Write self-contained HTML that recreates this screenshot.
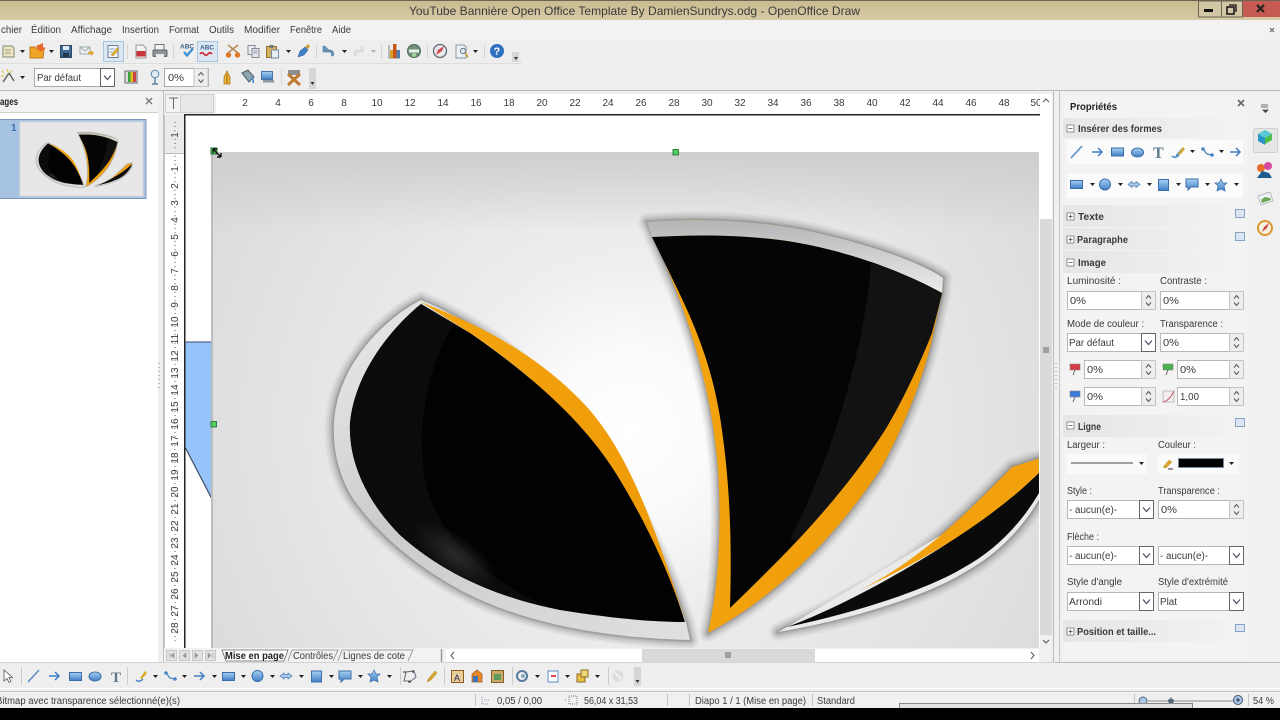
<!DOCTYPE html>
<html lang="fr"><head><meta charset="utf-8"><title>OpenOffice Draw</title>
<style>html,body{margin:0;padding:0;background:#000;width:1280px;height:720px;overflow:hidden}svg{display:block;filter:blur(.35px)}text{font-family:"Liberation Sans",sans-serif;font-size:10px;fill:#3a3a3a}.b{font-weight:bold;fill:#222}</style></head><body>
<svg xmlns="http://www.w3.org/2000/svg" width="1280" height="720" viewBox="0 0 1280 720">
<defs>
<linearGradient id="tb" x1="0" y1="0" x2="0" y2="1"><stop offset="0" stop-color="#c9bb90"/><stop offset="1" stop-color="#d6caa6"/></linearGradient>
<linearGradient id="band" x1="0" y1="0" x2="1" y2="0"><stop offset="0" stop-color="#e6e6e6"/><stop offset="1" stop-color="#f3f3f3"/></linearGradient>
<linearGradient id="bl" x1="0" y1="0" x2="0" y2="1"><stop offset="0" stop-color="#a9d0f2"/><stop offset="1" stop-color="#3f7fc6"/></linearGradient>
<linearGradient id="or" x1="0" y1="0" x2="1" y2="0"><stop offset="0" stop-color="#f4a50e"/><stop offset="1" stop-color="#ee9a08"/></linearGradient>
<linearGradient id="rim" x1="0" y1="0" x2="1" y2="1"><stop offset="0" stop-color="#ececec"/><stop offset=".4" stop-color="#cbcbcb"/><stop offset="1" stop-color="#e0e0e0"/></linearGradient>
<linearGradient id="rim2" x1="0" y1="0" x2="0" y2="1"><stop offset="0" stop-color="#b4b4b4"/><stop offset="1" stop-color="#ececec"/></linearGradient>
<linearGradient id="topfade" x1="0" y1="0" x2="0" y2="1"><stop offset="0" stop-color="#cecece"/><stop offset="1" stop-color="#cecece" stop-opacity="0"/></linearGradient>
<radialGradient id="bg" gradientUnits="userSpaceOnUse" cx="630" cy="430" r="560"><stop offset="0" stop-color="#fff"/><stop offset=".14" stop-color="#fbfbfb"/><stop offset=".3" stop-color="#eeeeee"/><stop offset=".6" stop-color="#e4e4e4"/><stop offset="1" stop-color="#d6d6d6"/></radialGradient>
<radialGradient id="glow"><stop offset="0" stop-color="#2a2a2a"/><stop offset="1" stop-color="#2a2a2a" stop-opacity="0"/></radialGradient>
<clipPath id="page"><rect x="213" y="152" width="826" height="496"/></clipPath>
<clipPath id="th"><rect x="20" y="122" width="123" height="74"/></clipPath>
<clipPath id="lb"><path d="M421,304C395,325 355,370 350,423C348,470 375,510 400,535C450,580 510,600 560,610C610,618 650,622 685,622C670,575 650,530 620,480C590,430 545,385 470,333Z"/></clipPath>
<clipPath id="mb"><path d="M652,237C690,235 730,234 780,240C840,248 900,270 942,293C938,310 934,325 932,333C915,375 900,405 885,430C840,500 785,555 730,608C732,540 730,480 720,417C712,370 700,335 673,280Z"/></clipPath>
<g id="a"><path d="M0 0h5l-2.500 3z" fill="#222"/></g>
<g id="spin"><rect width="14" height="18" fill="#eee" stroke="#c4c4c4"/><path d="M4.500 7l2.500-3 2.500 3M4.500 11l2.500 3 2.500-3" fill="none" stroke="#555"/></g>
<g id="sel"><rect width="14" height="18" fill="#fff" stroke="#666"/><path d="M3.500 7l3.500 4 3.500-4" fill="none" stroke="#556" stroke-width="1.300"/></g>
<g id="sil" fill="none" stroke-linejoin="round">
<path d="M421,300C385,318 337,365 334,423C332,460 345,490 360,508C385,540 420,568 460,590C520,622 600,638 690,640L686,622C670,575 650,530 620,480C590,430 530,345 421,300Z"/>
<path d="M647,222C700,218 770,220 830,236C880,248 925,265 943,278L942,293L934,330C925,375 905,425 880,470C830,545 770,600 708,633C718,590 722,530 718,470C712,390 690,325 672,280Z"/>
<path d="M778,632C860,618 932,593 965,572C1002,552 1032,519 1050,478V455L1012,467C965,515 920,560 860,590C835,605 810,618 787,627Z"/>
</g>
<g id="logo">
<use href="#sil" stroke="#333" stroke-width="18" stroke-opacity=".05"/>
<use href="#sil" stroke="#333" stroke-width="14" stroke-opacity=".07"/>
<use href="#sil" stroke="#333" stroke-width="10" stroke-opacity=".09"/>
<use href="#sil" stroke="#333" stroke-width="6" stroke-opacity=".12"/>
<use href="#sil" stroke="#333" stroke-width="3" stroke-opacity=".16"/>
<path d="M421,300C385,318 337,365 334,423C332,460 345,490 360,508C385,540 420,568 460,590C520,622 600,638 690,640L686,622C670,575 650,530 620,480C590,430 530,345 421,300Z" fill="url(#rim)"/>
<path d="M421,302C460,318 530,345 587,407C625,450 650,510 684,618C660,560 640,515 620,480C590,432 540,380 470,333Z" fill="url(#or)"/>
<path d="M421,304C395,325 355,370 350,423C348,470 375,510 400,535C450,580 510,600 560,610C610,618 650,622 685,622C670,575 650,530 620,480C590,430 545,385 470,333Z" fill="#020202"/>
<g clip-path="url(#lb)"><path d="M345,300H470C430,350 415,420 425,480C435,530 480,580 560,612L345,620Z" fill="#0b0b0b"/><ellipse cx="455" cy="555" rx="50" ry="20" fill="url(#glow)" transform="rotate(35 455 555)"/></g>
<path d="M647,222C700,218 770,220 830,236C880,248 925,265 943,278L942,293L934,330C925,375 905,425 880,470C830,545 770,600 708,633C718,590 722,530 718,470C712,390 690,325 672,280Z" fill="url(#or)"/>
<path d="M647,222C700,218 770,220 830,236C880,248 925,265 943,278L942,293C900,270 840,248 780,240C730,234 690,235 652,237Z" fill="url(#rim2)"/>
<path d="M652,237C690,235 730,234 780,240C840,248 900,270 942,293C938,310 934,325 932,333C915,375 900,405 885,430C840,500 785,555 730,608C732,540 730,480 720,417C712,370 700,335 673,280Z" fill="#050505"/>
<g clip-path="url(#mb)"><path d="M872,250C868,330 840,440 790,540L960,540L960,250Z" fill="#121212"/></g>
<path d="M778,632C860,618 932,593 965,572C1002,552 1032,519 1050,478V470L787,627Z" fill="#eaeaea"/>
<path d="M787,627C860,600 960,540 1012,497C1025,487 1035,476 1050,463V472C1030,515 1000,548 963,568C930,588 860,612 787,627Z" fill="#0a0a0a"/>
<path d="M860,590C920,560 965,515 1012,467L1050,455V463C1035,476 1025,487 1012,497C970,532 920,562 860,590Z" fill="#f2a00c"/>
</g>
</defs>

<rect width="1280" height="720" fill="#efefef"/>
<!-- title bar -->
<rect width="1280" height="20" fill="url(#tb)"/><rect width="1280" height="1" fill="#6b6551"/>
<text x="409" y="15" style="font-size:12px" textLength="451" lengthAdjust="spacingAndGlyphs" fill="#333">YouTube Bannière Open Office Template By DamienSundrys.odg - OpenOffice Draw</text>
<rect x="1198.500" y="1" width="23" height="16" fill="#d2c7a4" stroke="#6b6551"/><rect x="1204" y="9" width="9" height="3" fill="#111"/>
<rect x="1221.500" y="1" width="21" height="16" fill="#d2c7a4" stroke="#6b6551"/><rect x="1227" y="7" width="7" height="7" fill="none" stroke="#111" stroke-width="1.500"/><path d="M1229 5h7v7" fill="none" stroke="#111" stroke-width="1.300"/>
<rect x="1243" y="1" width="37" height="16" fill="#c65a52"/><path d="M1257 5l7 7M1264 5l-7 7" stroke="#222" stroke-width="2.200"/>
<!-- menu -->
<rect y="20" width="1280" height="20" fill="#f2f2f2"/>
<g>
<text x="1" y="33" textLength="21" lengthAdjust="spacingAndGlyphs">chier</text>
<text x="31" y="33" textLength="30" lengthAdjust="spacingAndGlyphs">Édition</text>
<text x="71" y="33" textLength="41" lengthAdjust="spacingAndGlyphs">Affichage</text>
<text x="122" y="33" textLength="37" lengthAdjust="spacingAndGlyphs">Insertion</text>
<text x="169" y="33" textLength="30" lengthAdjust="spacingAndGlyphs">Format</text>
<text x="209" y="33" textLength="25" lengthAdjust="spacingAndGlyphs">Outils</text>
<text x="244" y="33" textLength="36" lengthAdjust="spacingAndGlyphs">Modifier</text>
<text x="290" y="33" textLength="32" lengthAdjust="spacingAndGlyphs">Fenêtre</text>
<text x="332" y="33" textLength="19" lengthAdjust="spacingAndGlyphs">Aide</text>
</g>
<path d="M1270 28l4 4M1274 28l-4 4" stroke="#777" stroke-width="1.300"/>
<!-- toolbars -->
<rect y="40" width="522" height="23" fill="#eeeeee"/><rect y="63" width="522" height="1" fill="#dedede"/>
<rect y="65" width="318" height="25" fill="#eeeeee"/>
<rect y="90" width="1280" height="1" fill="#b8b8b8"/>
<rect x="103.500" y="41.500" width="20" height="20" fill="#dbe8f4" stroke="#a6c6e2"/>
<rect x="197.500" y="41.500" width="20" height="20" fill="#dbe8f4" stroke="#a6c6e2"/>
<path d="M127.500 44v15M173.500 44v15M316.500 44v15M381.500 44v15M427.500 44v15M484.500 44v15M281.500 70v15" stroke="#d6d6d6"/>
<!-- new -->
<path d="M3 46h9l2 2v9H3z" fill="#efe6c0" stroke="#7f8a7a"/><path d="M5 50h6M5 53h6" stroke="#8a9a8a"/><use href="#a" x="20" y="50"/>
<!-- open -->
<path d="M30 47h5l2 2h7l-1 9H30z" fill="#f0a428" stroke="#c07818"/><path d="M36 46l7-3v4l3 1-6 4z" fill="#e66a2a"/><use href="#a" x="49" y="50"/>
<!-- save -->
<rect x="60.500" y="45.500" width="11" height="12" fill="#3e6a96" stroke="#2c4664"/><rect x="63" y="46" width="6" height="4" fill="#e2eaf2"/><rect x="63" y="53" width="6" height="4" fill="#22384e"/>
<!-- mail -->
<rect x="80" y="47" width="10" height="7" fill="#eef0f2" stroke="#9aa"/><path d="M80 47l5 4 5-4" fill="none" stroke="#9aa"/><path d="M88 52h3v-2l3 3-3 3v-2h-3z" fill="#e0a030"/>
<!-- edit -->
<rect x="108" y="45.500" width="10" height="12" fill="#f4f8fb" stroke="#6f7f90"/><path d="M109.500 49h5M109.500 52h3" stroke="#7a9ab8"/><path d="M111 55l6-7 2 2-6 6z" fill="#e0b030" stroke="#a0781c" stroke-width=".4"/>
<!-- pdf -->
<path d="M136 45h7l3 3v10h-10z" fill="#f5f2f2" stroke="#999"/><rect x="136.500" y="51" width="9" height="5.500" fill="#c9343a"/>
<!-- print -->
<rect x="155" y="44.500" width="9" height="6" fill="#f2f2f2" stroke="#777"/><rect x="153" y="50" width="14" height="6.500" rx="1" fill="#8e949a" stroke="#5f666c"/><rect x="156" y="54" width="8" height="3.500" fill="#eee"/>
<!-- spell -->
<text x="180" y="48.500" style="font-size:6.500px;font-weight:bold;fill:#3a5f88">ABC</text><path d="M184 52l3 3.500 6-7" fill="none" stroke="#3f8fd8" stroke-width="2.200"/>
<text x="200" y="49.500" style="font-size:6.500px;font-weight:bold;fill:#3a5f88">ABC</text><path d="M200 54q2-2.500 4 0t4 0 4 0" fill="none" stroke="#d22835" stroke-width="1.800"/>
<!-- cut -->
<path d="M228 45l10 8M238 45l-10 8" stroke="#b98a58" stroke-width="1.600"/><circle cx="228.500" cy="55" r="2.700" fill="#e07a26"/><circle cx="237.500" cy="55" r="2.700" fill="#e07a26"/>
<!-- copy -->
<rect x="248" y="45.500" width="7" height="9" fill="#eee" stroke="#889"/><rect x="252" y="48.500" width="7" height="9" fill="#e2e8ee" stroke="#889"/><path d="M253.500 51h4M253.500 53h4" stroke="#99a"/>
<!-- paste -->
<rect x="266.500" y="46.500" width="10" height="11" fill="#d4b060" stroke="#8f7238"/><rect x="269.500" y="45" width="4" height="3" fill="#777"/><rect x="271.500" y="50" width="7" height="8" fill="#e6eef4" stroke="#6f8aa0"/>
<use href="#a" x="286" y="50"/>
<!-- brush -->
<path d="M298 57l2-6 5-4 3 3-4 5z" fill="#3f7fc8" stroke="#2a5688" stroke-width=".5"/><path d="M305 47l3-3 2 2-2 3z" fill="#c8a030"/>
<!-- undo -->
<path d="M324 46v5h6q4 1 2 5" fill="none" stroke="#5f8cb2" stroke-width="2.800"/><path d="M324 46l5 5" stroke="#5f8cb2" stroke-width="1.600"/><use href="#a" x="342" y="50"/>
<!-- redo -->
<path d="M362 46v5h-5q-3 1-1 5" fill="none" stroke="#d8dcdf" stroke-width="2.800"/><use href="#a" x="371" y="50" opacity=".3"/>
<!-- chart -->
<path d="M389 45v13h11" fill="none" stroke="#666" stroke-width=".8"/><path d="M390 50h3v8h-3z" fill="#d8a020"/><path d="M393 44h3.500v14H393z" fill="#c85418"/><path d="M396.500 50h3.500v8h-3.500z" fill="#4f7ba8"/>
<!-- gallery -->
<circle cx="414" cy="51" r="6.500" fill="#6f8f78" stroke="#4f6a58"/><rect x="409" y="49.500" width="10" height="3" fill="#e8efe8"/><circle cx="414" cy="55" r="2" fill="#a6d69a"/>
<!-- navigator -->
<circle cx="440" cy="51" r="6.500" fill="#e6e8ea" stroke="#5f6a78" stroke-width="1.300"/><path d="M436 55l2-5 6-4-2 5z" fill="#cf4444"/>
<!-- find -->
<path d="M456 45h8l2 2v11h-10z" fill="#eef1f4" stroke="#8a96a3"/><circle cx="463" cy="51" r="2.600" fill="#dcebf5" stroke="#6a7a88"/><path d="M465 53l3 4" stroke="#c8a030" stroke-width="1.800"/><use href="#a" x="473" y="50"/>
<!-- help -->
<circle cx="497" cy="51" r="7" fill="#2e6fc0"/><text x="493.500" y="55" style="font-size:11px;font-weight:bold;fill:#fff">?</text>
<path d="M512 52h7v10h-7z" fill="#d6d6d6"/><path d="M514 57h4l-2 3z" fill="#333"/>
<!-- toolbar 2 -->
<path d="M3 82l6-9" stroke="#777" stroke-width="1.800"/><path d="M9 73l5 8" stroke="#555" stroke-width="1.300"/><path d="M2 71l2 2M7 69l1 3M12 71l-2 2M1 76h3" stroke="#e8c850" stroke-width="1.300"/><use href="#a" x="20" y="76"/>
<rect x="34.500" y="68.500" width="80" height="18" fill="#fff" stroke="#aaa"/><text x="37" y="81" textLength="44" lengthAdjust="spacingAndGlyphs">Par défaut</text><use href="#sel" x="100.500" y="68.500"/>
<rect x="125" y="71" width="12" height="12" fill="#ddd" stroke="#667"/><path d="M128 72h2.500v10H128z" fill="#3aa03a"/><path d="M130.500 72h2.500v10h-2.500z" fill="#d9c020"/><path d="M133 72h3v10h-3z" fill="#c44"/>
<circle cx="155" cy="74" r="3.800" fill="#e0ebf4" stroke="#5a86a8"/><path d="M155 78v6M152 84h6" stroke="#5a86a8" stroke-width="1.500"/>
<rect x="164.500" y="68.500" width="44" height="18" fill="#fff" stroke="#aaa"/><text x="168" y="81" textLength="16" lengthAdjust="spacingAndGlyphs">0%</text><use href="#spin" x="194" y="68.500"/>
<path d="M224 84v-7l3-6 3 6v7z" fill="#ecb838" stroke="#a86a18" stroke-width=".7"/><path d="M227 74v9" stroke="#a06018"/>
<path d="M242 73l6-3 6 7-5 5z" fill="#8ea3b0" stroke="#4f5f6a"/><path d="M252 78q2 2 1 5" stroke="#38c" fill="none" stroke-width="1.500"/>
<rect x="261.500" y="71.500" width="11" height="8" fill="url(#bl)" stroke="#4a74a4"/><rect x="263" y="80" width="11" height="2.500" fill="#8a96a0"/>
<rect x="288" y="70" width="12" height="5" fill="#8a8f94"/><path d="M288 74l12 11M300 74l-12 11" stroke="#c07a30" stroke-width="3"/>
<path d="M309 68h7v21h-7z" fill="#d6d6d6"/><path d="M310.500 82h4l-2 3z" fill="#333"/>

<!-- left pages panel -->
<rect y="91" width="158" height="571" fill="#fff"/><rect y="91" width="158" height="21" fill="#f2f2f2"/><rect y="112" width="158" height="1" fill="#cfcfcf"/>
<text x="0" y="105" class="b" textLength="18" lengthAdjust="spacingAndGlyphs">ages</text>
<path d="M146 98l6 6M152 98l-6 6" stroke="#777" stroke-width="1.400"/>
<rect x="-2" y="119.500" width="148" height="79" fill="#a7c3e4" stroke="#7f95ba"/>
<text x="11" y="131" style="font-size:10px;font-weight:bold;fill:#3d6fa8">1</text>
<rect x="20" y="122" width="123" height="74" fill="#e8e8e8"/>
<g clip-path="url(#th)"><rect x="20" y="122" width="123" height="74" fill="#e7e7e7"/><use href="#logo" transform="translate(-7.900 104) scale(.133 .13)"/></g>
<rect x="20" y="122" width="123" height="74" fill="none" stroke="#d8d8d8"/>
<rect x="158" y="91" width="6" height="571" fill="#efefef"/><rect x="163" y="91" width="1" height="571" fill="#c0c0c0"/>
<path d="M159 363v28" stroke="#888" stroke-dasharray="1 3"/>

<!-- ruler corner + rulers -->
<rect x="164" y="91" width="891" height="24" fill="#f0f0f0"/>
<rect x="165.500" y="94.500" width="48" height="18" fill="#e8e8e8" stroke="#cfcfcf"/><rect x="165.500" y="94.500" width="15" height="18" fill="#f2f2f2" stroke="#cfcfcf"/>
<path d="M169 98h9M173.500 98v11" stroke="#666"/>
<rect x="216" y="94" width="823" height="20" fill="#fff"/>
<g text-anchor="middle">
<text x="245" y="106">2</text><text x="278" y="106">4</text><text x="311" y="106">6</text><text x="344" y="106">8</text><text x="377" y="106">10</text><text x="410" y="106">12</text><text x="443" y="106">14</text><text x="476" y="106">16</text><text x="509" y="106">18</text><text x="542" y="106">20</text><text x="575" y="106">22</text><text x="608" y="106">24</text><text x="641" y="106">26</text><text x="674" y="106">28</text><text x="707" y="106">30</text><text x="740" y="106">32</text><text x="773" y="106">34</text><text x="806" y="106">36</text><text x="839" y="106">38</text><text x="872" y="106">40</text><text x="905" y="106">42</text><text x="938" y="106">44</text><text x="971" y="106">46</text><text x="1004" y="106">48</text><text x="1036" y="106">50</text>
</g>
<rect x="164" y="115" width="20" height="533" fill="#fff"/><rect x="164" y="115" width="20" height="38" fill="#ebebeb"/><rect x="164" y="153" width="20" height="1" fill="#bbb"/><rect x="164" y="115" width="1" height="533" fill="#c4c4c4"/>
<path d="M175 121.750V648" stroke="#555" stroke-dasharray="1 3.250 1 3.250 1 7.500"/>
<g text-anchor="middle" style="font-size:10px">
<text transform="translate(178 135) rotate(-90)">1</text>
<text transform="translate(178 169) rotate(-90)">1</text><text transform="translate(178 186) rotate(-90)">2</text><text transform="translate(178 203) rotate(-90)">3</text><text transform="translate(178 220) rotate(-90)">4</text><text transform="translate(178 237) rotate(-90)">5</text><text transform="translate(178 254) rotate(-90)">6</text><text transform="translate(178 271) rotate(-90)">7</text><text transform="translate(178 288) rotate(-90)">8</text><text transform="translate(178 305) rotate(-90)">9</text><text transform="translate(178 322) rotate(-90)">10</text><text transform="translate(178 339) rotate(-90)">11</text><text transform="translate(178 356) rotate(-90)">12</text><text transform="translate(178 373) rotate(-90)">13</text><text transform="translate(178 390) rotate(-90)">14</text><text transform="translate(178 407) rotate(-90)">15</text><text transform="translate(178 424) rotate(-90)">16</text><text transform="translate(178 441) rotate(-90)">17</text><text transform="translate(178 458) rotate(-90)">18</text><text transform="translate(178 475) rotate(-90)">19</text><text transform="translate(178 492) rotate(-90)">20</text><text transform="translate(178 509) rotate(-90)">21</text><text transform="translate(178 526) rotate(-90)">22</text><text transform="translate(178 543) rotate(-90)">23</text><text transform="translate(178 560) rotate(-90)">24</text><text transform="translate(178 577) rotate(-90)">25</text><text transform="translate(178 594) rotate(-90)">26</text><text transform="translate(178 611) rotate(-90)">27</text><text transform="translate(178 628) rotate(-90)">28</text>
</g>

<!-- canvas -->
<rect x="184" y="114" width="856" height="534" fill="#fff"/>
<rect x="184" y="114" width="856" height="1.500" fill="#222"/><rect x="184" y="114" width="1.500" height="534" fill="#222"/>
<path d="M185.500 342H213V501L185.500 447Z" fill="#95c3fa"/><path d="M185 342H213" stroke="#5b6a8c" stroke-width="1.200"/><path d="M185 447L213 501" stroke="#3f4a60" stroke-width="1.200"/>
<rect x="211" y="150" width="2" height="498" fill="#bdbdbd"/>
<g clip-path="url(#page)">
<rect x="213" y="152" width="826" height="496" fill="url(#bg)"/>
<rect x="213" y="152" width="826" height="80" fill="url(#topfade)"/>
<use href="#logo"/>
</g>
<rect x="673" y="149.500" width="5.500" height="5.500" fill="#4fcf5c" stroke="#1c6a28" stroke-width=".8"/>
<rect x="211" y="421.500" width="5.500" height="5.500" fill="#4fcf5c" stroke="#1c6a28" stroke-width=".8"/>
<rect x="211" y="148" width="6" height="6" fill="#4fcf5c" stroke="#1c6a28"/>
<path d="M213 149l8 8M213 149v4M213 149h4M221 157v-4M221 157h-4" stroke="#111" stroke-width="1.400" fill="none"/>

<!-- right v scrollbar -->
<rect x="1040" y="91" width="13" height="557" fill="#f0f0f0"/><rect x="1040" y="94" width="12" height="125" fill="#fff"/><rect x="1040" y="219" width="12" height="416" fill="#d9d9d9"/>
<path d="M1043 102l3-3 3 3" fill="none" stroke="#555"/><path d="M1043 640l3 3 3-3" fill="none" stroke="#555"/>
<path d="M1043 348h6M1043 350h6M1043 352h6" stroke="#666"/>

<!-- tabs + h scroll -->
<rect x="164" y="648" width="891" height="14" fill="#f0f0f0"/><rect x="164" y="648" width="280" height="14" fill="#f2f2f2"/>
<g fill="#e2e2e2" stroke="#c8c8c8"><rect x="166.500" y="650.500" width="10" height="10"/><rect x="179.500" y="650.500" width="10" height="10"/><rect x="192.500" y="650.500" width="10" height="10"/><rect x="205.500" y="650.500" width="10" height="10"/></g>
<path d="M170 653v5M174 653l-3 2.500 3 2.500zM186 653l-3 2.500 3 2.500zM195 653l3 2.500-3 2.500zM208 653l3 2.500-3 2.500zM213 653v5" fill="#999" stroke="#999" stroke-width=".6"/>
<path d="M222 650l4 11H284l4-11z" fill="#fff" stroke="#666" stroke-width=".8"/>
<path d="M288 661l4-11H338l-5 11M338 661l4-11H413l-5 11" fill="none" stroke="#888" stroke-width=".8"/>
<text x="225" y="659" class="b" textLength="59" lengthAdjust="spacingAndGlyphs" fill="#111">Mise en page</text>
<text x="293" y="659" textLength="40" lengthAdjust="spacingAndGlyphs">Contrôles</text>
<text x="343" y="659" textLength="62" lengthAdjust="spacingAndGlyphs">Lignes de cote</text>
<path d="M441.500 649v13" stroke="#999" stroke-width="1.500"/>
<rect x="446" y="649" width="593" height="13" fill="#fff"/><rect x="642" y="649" width="173" height="13" fill="#d9d9d9"/>
<path d="M454 652l-3 3.500 3 3.500M1031 652l3 3.500-3 3.500" fill="none" stroke="#555"/>
<path d="M726 652v6M728 652v6M730 652v6" stroke="#666"/>

<!-- properties panel -->
<rect x="1053" y="91" width="227" height="571" fill="#f0f0f0"/><rect x="1053" y="91" width="1" height="571" fill="#bbb"/><rect x="1059" y="91" width="1" height="571" fill="#c4c4c4"/>
<path d="M1056 363v28" stroke="#999" stroke-dasharray="1 3"/>
<rect x="1063" y="95" width="185" height="565" fill="#f3f3f3"/>
<rect x="1055" y="662" width="225" height="1" fill="#bbb"/><rect y="662" x="0" width="1055" height="1" fill="#d4d4d4"/>
<text x="1070" y="110" class="b" textLength="47" lengthAdjust="spacingAndGlyphs">Propriétés</text>
<path d="M1238 100l6 6M1244 100l-6 6" stroke="#666" stroke-width="1.600"/>
<g fill="url(#band)"><rect x="1063" y="118" width="185" height="20"/><rect x="1063" y="205" width="185" height="22"/><rect x="1063" y="228" width="185" height="22"/><rect x="1063" y="251" width="185" height="22"/><rect x="1063" y="415" width="185" height="22"/><rect x="1063" y="620" width="185" height="22"/></g>
<g fill="#fff" stroke="#777" stroke-width=".8"><rect x="1067" y="125" width="7" height="7"/><rect x="1067" y="213" width="7" height="7"/><rect x="1067" y="236" width="7" height="7"/><rect x="1067" y="259" width="7" height="7"/><rect x="1067" y="422" width="7" height="7"/><rect x="1067" y="628" width="7" height="7"/></g>
<path d="M1068.500 128.500h4M1068.500 216.500h4M1070.500 214.500v4M1068.500 239.500h4M1070.500 237.500v4M1068.500 262.500h4M1068.500 425.500h4M1068.500 631.500h4M1070.500 629.500v4" stroke="#444" stroke-width=".8"/>
<g style="font-weight:bold">
<text x="1078" y="132" textLength="84" lengthAdjust="spacingAndGlyphs">Insérer des formes</text>
<text x="1078" y="220" textLength="26" lengthAdjust="spacingAndGlyphs">Texte</text>
<text x="1077" y="243" textLength="51" lengthAdjust="spacingAndGlyphs">Paragraphe</text>
<text x="1078" y="266" textLength="28" lengthAdjust="spacingAndGlyphs">Image</text>
<text x="1078" y="430" textLength="23" lengthAdjust="spacingAndGlyphs">Ligne</text>
<text x="1077" y="635" textLength="79" lengthAdjust="spacingAndGlyphs">Position et taille...</text>
</g>
<g fill="#dbe6f2" stroke="#7d9cc0" stroke-width=".9"><rect x="1235.500" y="209.500" width="9" height="8"/><rect x="1235.500" y="232.500" width="9" height="8"/><rect x="1235.500" y="418.500" width="9" height="8"/><rect x="1235.500" y="624.500" width="9" height="7"/></g>
<!-- shapes decks -->
<rect x="1067" y="140" width="176" height="24" fill="#fbfbfb"/><rect x="1067" y="174" width="176" height="24" fill="#fbfbfb"/>
<path d="M1071 158l11-12" stroke="#5a8cc6" stroke-width="1.600"/>
<path d="M1092 152h10M1098 148l4 4-4 4" fill="none" stroke="#3f7fc6" stroke-width="1.500"/>
<rect x="1111.500" y="148" width="12" height="8" fill="url(#bl)" stroke="#3a6ea8"/>
<ellipse cx="1137.500" cy="152.500" rx="6" ry="4.500" fill="url(#bl)" stroke="#3a6ea8"/>
<text x="1153" y="158" style="font-family:'Liberation Serif',serif;font-size:16px;font-weight:bold;fill:#5f7a8c">T</text>
<path d="M1172 156q3 3 7-1M1176 156l7-8" fill="none" stroke="#4a86c2" stroke-width="1.500"/><path d="M1178 154l5-7 2 2-5 6z" fill="#d9a92a"/><use href="#a" x="1190" y="150"/>
<circle cx="1203" cy="149" r="1.800" fill="#4a86c2"/><circle cx="1212" cy="155" r="1.800" fill="#4a86c2"/><path d="M1203 149l4 5 5 1" fill="none" stroke="#4a86c2" stroke-width="1.300"/><use href="#a" x="1219" y="150"/>
<path d="M1230 152h10M1236 148l4 4-4 4" fill="none" stroke="#3f7fc6" stroke-width="1.500"/>
<rect x="1070.500" y="180.500" width="12" height="8" fill="url(#bl)" stroke="#3a6ea8"/><use href="#a" x="1090" y="183"/>
<circle cx="1105" cy="184.500" r="5.500" fill="url(#bl)" stroke="#3a6ea8"/><use href="#a" x="1118" y="183"/>
<path d="M1128 184.500l4-3v1.500h4v-1.500l4 3-4 3v-1.500h-4v1.500z" fill="#a9c8ea" stroke="#4a7cb4" stroke-width=".7"/><use href="#a" x="1147" y="183"/>
<rect x="1158.500" y="179.500" width="10" height="11" fill="url(#bl)" stroke="#3a6ea8"/><use href="#a" x="1176" y="183"/>
<path d="M1186 179h12v8h-7l-3 3v-3h-2z" fill="url(#bl)" stroke="#3a6ea8"/><use href="#a" x="1205" y="183"/>
<path d="M1221 179l2 4h4l-3 3 1 5-4-2-4 2 1-5-3-3h4z" fill="url(#bl)" stroke="#3a6ea8" stroke-width=".7"/><use href="#a" x="1234" y="183"/>
<!-- Image section -->
<g>
<text x="1067" y="284" textLength="54" lengthAdjust="spacingAndGlyphs">Luminosité :</text>
<text x="1160" y="284" textLength="47" lengthAdjust="spacingAndGlyphs">Contraste :</text>
<text x="1067" y="327" textLength="77" lengthAdjust="spacingAndGlyphs">Mode de couleur :</text>
<text x="1160" y="327" textLength="63" lengthAdjust="spacingAndGlyphs">Transparence :</text>
<text x="1067" y="448" textLength="38" lengthAdjust="spacingAndGlyphs">Largeur :</text>
<text x="1158" y="448" textLength="38" lengthAdjust="spacingAndGlyphs">Couleur :</text>
<text x="1067" y="494" textLength="25" lengthAdjust="spacingAndGlyphs">Style :</text>
<text x="1158" y="494" textLength="62" lengthAdjust="spacingAndGlyphs">Transparence :</text>
<text x="1067" y="540" textLength="32" lengthAdjust="spacingAndGlyphs">Flèche :</text>
<text x="1067" y="585" textLength="55" lengthAdjust="spacingAndGlyphs">Style d'angle</text>
<text x="1158" y="585" textLength="70" lengthAdjust="spacingAndGlyphs">Style d'extrémité</text>
</g>
<g fill="#fff" stroke="#b8b8b8">
<rect x="1067.500" y="291.500" width="88" height="18"/><rect x="1160.500" y="291.500" width="83" height="18"/>
<rect x="1067.500" y="333.500" width="88" height="18"/><rect x="1160.500" y="333.500" width="83" height="18"/>
<rect x="1084.500" y="360.500" width="71" height="18"/><rect x="1177.500" y="360.500" width="66" height="18"/>
<rect x="1084.500" y="387.500" width="71" height="18"/><rect x="1177.500" y="387.500" width="66" height="18"/>
<rect x="1067.500" y="500.500" width="86" height="18"/><rect x="1158.500" y="500.500" width="85" height="18"/>
<rect x="1067.500" y="546.500" width="86" height="18"/><rect x="1158.500" y="546.500" width="85" height="18"/>
<rect x="1067.500" y="592.500" width="86" height="18"/><rect x="1158.500" y="592.500" width="85" height="18"/>
</g>
<use href="#spin" x="1141.500" y="291.500"/><use href="#spin" x="1229.500" y="291.500"/>
<use href="#sel" x="1141.500" y="333.500"/><use href="#spin" x="1229.500" y="333.500"/>
<use href="#spin" x="1141.500" y="360.500"/><use href="#spin" x="1229.500" y="360.500"/>
<use href="#spin" x="1141.500" y="387.500"/><use href="#spin" x="1229.500" y="387.500"/>
<use href="#sel" x="1139.500" y="500.500"/><use href="#spin" x="1229.500" y="500.500"/>
<use href="#sel" x="1139.500" y="546.500"/><use href="#sel" x="1229.500" y="546.500"/>
<use href="#sel" x="1139.500" y="592.500"/><use href="#sel" x="1229.500" y="592.500"/>
<text x="1070" y="304" textLength="16" lengthAdjust="spacingAndGlyphs">0%</text><text x="1163" y="304" textLength="16" lengthAdjust="spacingAndGlyphs">0%</text>
<text x="1069" y="346" textLength="45" lengthAdjust="spacingAndGlyphs">Par défaut</text><text x="1163" y="346" textLength="16" lengthAdjust="spacingAndGlyphs">0%</text>
<text x="1087" y="373" textLength="16" lengthAdjust="spacingAndGlyphs">0%</text><text x="1180" y="373" textLength="16" lengthAdjust="spacingAndGlyphs">0%</text>
<text x="1087" y="400" textLength="16" lengthAdjust="spacingAndGlyphs">0%</text><text x="1180" y="400" textLength="19" lengthAdjust="spacingAndGlyphs">1,00</text>
<text x="1069" y="513" textLength="48" lengthAdjust="spacingAndGlyphs">- aucun(e)-</text><text x="1161" y="513" textLength="16" lengthAdjust="spacingAndGlyphs">0%</text>
<text x="1069" y="559" textLength="48" lengthAdjust="spacingAndGlyphs">- aucun(e)-</text><text x="1160" y="559" textLength="48" lengthAdjust="spacingAndGlyphs">- aucun(e)-</text>
<text x="1069" y="605" textLength="33" lengthAdjust="spacingAndGlyphs">Arrondi</text><text x="1160" y="605" textLength="17" lengthAdjust="spacingAndGlyphs">Plat</text>
<rect x="1070" y="364" width="10" height="6" fill="#d83a46" stroke="#888" stroke-width=".6"/><path d="M1075 370l-2 5" stroke="#666"/>
<rect x="1163" y="364" width="10" height="6" fill="#4cb04c" stroke="#888" stroke-width=".6"/><path d="M1168 370l-2 5" stroke="#666"/>
<rect x="1070" y="391" width="10" height="6" fill="#3c78d8" stroke="#888" stroke-width=".6"/><path d="M1075 397l-2 5" stroke="#666"/>
<rect x="1163" y="391" width="11" height="11" fill="#f4efef" stroke="#aaa" stroke-width=".7"/><path d="M1163 402q6-1 11-11" fill="none" stroke="#c45a6a"/>
<!-- line dropdowns -->
<rect x="1067" y="454" width="80" height="20" fill="#fafafa"/><path d="M1071 463h62" stroke="#444"/><use href="#a" x="1139" y="462"/>
<rect x="1158" y="454" width="80" height="20" fill="#fafafa"/><path d="M1163 467l6-7 3 2-6 6z" fill="#d9a92a" stroke="#a87a20" stroke-width=".4"/><path d="M1168 469h5" stroke="#333"/><rect x="1178.500" y="458.500" width="45" height="9" fill="#000" stroke="#7c8ea0"/><use href="#a" x="1229" y="462"/>

<!-- sidebar tabs -->
<path d="M1261 105h7M1261 107h7M1263 110h5l-2.500 2.500z" stroke="#444" fill="#444" stroke-width=".8"/>
<rect x="1253.500" y="128.500" width="24" height="24" rx="2" fill="#e6e6e6" stroke="#d0d0d0"/>
<path d="M1258 134l7-4 7 4v6l-7 4-7-4z" fill="#4dbf4a"/><path d="M1258 134l7 4v7l-7-4z" fill="#2b92c8"/><path d="M1265 130l7 4-7 4-7-4z" fill="#58c9d8"/>
<circle cx="1261" cy="168" r="4" fill="#e66c2c"/><circle cx="1268" cy="166" r="4" fill="#d44aa0"/><path d="M1257 178l5-7 7 2 3 5z" fill="#1e5a8c"/>
<path d="M1258 196l12-4 3 9-12 4z" fill="#eef2f4" stroke="#aaa" stroke-width=".7"/><path d="M1261 200l4-3 5 1 1 2-9 3z" fill="#6aa858"/>
<circle cx="1265" cy="228" r="7" fill="#f8f1e0" stroke="#d89a30" stroke-width="2"/><path d="M1262 232l2-5 5-4-2 5z" fill="#c44"/>

<!-- bottom toolbar -->
<rect y="663" width="642" height="25" fill="#eeeeee"/>
<path d="M4 670v11l3-2.500 2 4 2-1-2-4h3.500z" fill="#fff" stroke="#555" stroke-width=".8"/>
<path d="M28 682l11-12" stroke="#5a8cc6" stroke-width="1.500"/>
<path d="M49 676h10M55 672l4 4-4 4" fill="none" stroke="#3f7fc6" stroke-width="1.500"/>
<rect x="69.500" y="672.500" width="12" height="8" fill="url(#bl)" stroke="#3a6ea8"/>
<ellipse cx="95" cy="676.500" rx="6" ry="4.500" fill="url(#bl)" stroke="#3a6ea8"/>
<text x="111" y="682" style="font-family:'Liberation Serif',serif;font-size:15px;font-weight:bold;fill:#5f7a8c">T</text>
<path d="M136 680q3 3 7-1" fill="none" stroke="#4a86c2" stroke-width="1.500"/><path d="M140 678l5-7 2 2-5 6z" fill="#d9a92a"/><use href="#a" x="153" y="675"/>
<circle cx="166" cy="673" r="1.800" fill="#4a86c2"/><circle cx="175" cy="679" r="1.800" fill="#4a86c2"/><path d="M166 673l4 5 5 1" fill="none" stroke="#4a86c2" stroke-width="1.300"/><use href="#a" x="182" y="675"/>
<path d="M194 676h10M200 672l4 4-4 4" fill="none" stroke="#3f7fc6" stroke-width="1.500"/><use href="#a" x="212" y="675"/>
<rect x="222.500" y="672.500" width="12" height="8" fill="url(#bl)" stroke="#3a6ea8"/><use href="#a" x="241" y="675"/>
<circle cx="257.500" cy="676" r="5.500" fill="url(#bl)" stroke="#3a6ea8"/><use href="#a" x="270" y="675"/>
<path d="M280 676l4-3v1.500h4v-1.500l4 3-4 3v-1.500h-4v1.500z" fill="#a9c8ea" stroke="#4a7cb4" stroke-width=".7"/><use href="#a" x="299" y="675"/>
<rect x="311.500" y="671" width="10" height="11" fill="url(#bl)" stroke="#3a6ea8"/><use href="#a" x="329" y="675"/>
<path d="M339 671h12v8h-7l-3 3v-3h-2z" fill="url(#bl)" stroke="#3a6ea8"/><use href="#a" x="358" y="675"/>
<path d="M374 670l2 4h4l-3 3 1 5-4-2-4 2 1-5-3-3h4z" fill="url(#bl)" stroke="#3a6ea8" stroke-width=".7"/><use href="#a" x="387" y="675"/>
<path d="M404 681l2-9 8-1 2 6-5 4z" fill="none" stroke="#667"/><path d="M403 672h3M413 670v3M408 682h3" stroke="#333"/>
<path d="M427 682l2-4 6-7 2 2-6 7z" fill="#d9a92a" stroke="#a87a20" stroke-width=".5"/>
<rect x="451.500" y="670.500" width="12" height="12" fill="#e8cf9a" stroke="#8a5a20"/><text x="454" y="681" style="font-size:9px;fill:#225">A</text>
<path d="M472 682v-8l5-4 5 4v8z" fill="#e8862a" stroke="#a4561a" stroke-width=".7"/><rect x="473" y="676" width="5" height="6" fill="#3a74b8"/>
<rect x="491.500" y="670.500" width="12" height="12" fill="#c9a868" stroke="#80602c"/><rect x="494" y="674" width="7" height="6" fill="#5c9a5c"/>
<circle cx="522" cy="676" r="5" fill="none" stroke="#557a9c" stroke-width="2"/><circle cx="523" cy="676" r="2" fill="#8ab"/><use href="#a" x="535" y="675"/>
<rect x="548" y="671" width="10" height="11" fill="#fff" stroke="#5a8cc6"/><path d="M551 676h5" stroke="#d44" stroke-width="2"/><use href="#a" x="565" y="675"/>
<rect x="577" y="674" width="8" height="8" fill="#e8c04a" stroke="#8a6a20"/><rect x="581" y="670" width="7" height="7" fill="#f0d678" stroke="#8a6a20"/><use href="#a" x="595" y="675"/>
<circle cx="618" cy="676" r="5.500" fill="#dcdcdc"/><path d="M615 673l6 6" stroke="#f4f4f4" stroke-width="2"/>
<path d="M634 667h7v19h-7z" fill="#d6d6d6"/><path d="M635.500 680h4l-2 3z" fill="#333"/>
<path d="M21.500 667v18M127.500 667v18M400.500 667v18M444.500 667v18M512.500 667v18M608.500 667v18" stroke="#ccc"/>
<rect y="688" width="1280" height="1" fill="#fff"/><rect y="691" width="1280" height="1" fill="#c4c4c4"/>

<!-- status bar -->
<rect y="692" width="1280" height="16" fill="#f0f0f0"/>
<text x="-4" y="704" textLength="184" lengthAdjust="spacingAndGlyphs">Bitmap avec transparence sélectionné(e)(s)</text>
<path d="M475.500 694v12M667.500 694v12M689.500 694v12M812.500 694v12M1134.500 694v12M1248.500 694v12" stroke="#c4c4c4"/>
<path d="M482 697v7h7M484 700h5" fill="none" stroke="#8a97a8" stroke-dasharray="1 1"/>
<text x="497" y="704" textLength="45" lengthAdjust="spacingAndGlyphs">0,05 / 0,00</text>
<path d="M569 696h8v8h-8zM565 700h2" fill="none" stroke="#777" stroke-dasharray="1 1"/>
<text x="584" y="704" textLength="54" lengthAdjust="spacingAndGlyphs">56,04 x 31,53</text>
<text x="695" y="704" textLength="111" lengthAdjust="spacingAndGlyphs">Diapo 1 / 1 (Mise en page)</text>
<text x="817" y="704" textLength="38" lengthAdjust="spacingAndGlyphs">Standard</text>
<circle cx="1143" cy="701" r="4" fill="#a9c8ea" stroke="#567"/><path d="M1148 701h85M1171 697v8" stroke="#888"/><ellipse cx="1171" cy="701" rx="3" ry="2.500" fill="#567"/>
<circle cx="1238" cy="700" r="4.500" fill="#a9c8ea" stroke="#456"/><path d="M1236 700h4M1238 698v4" stroke="#234"/>
<text x="1253" y="704" textLength="21" lengthAdjust="spacingAndGlyphs">54 %</text>
<rect x="899.500" y="703.500" width="293" height="5" fill="#e2e2e2" stroke="#888"/>
<rect x="0" y="708" width="1280" height="12" fill="#000"/>
</svg>
</body></html>
